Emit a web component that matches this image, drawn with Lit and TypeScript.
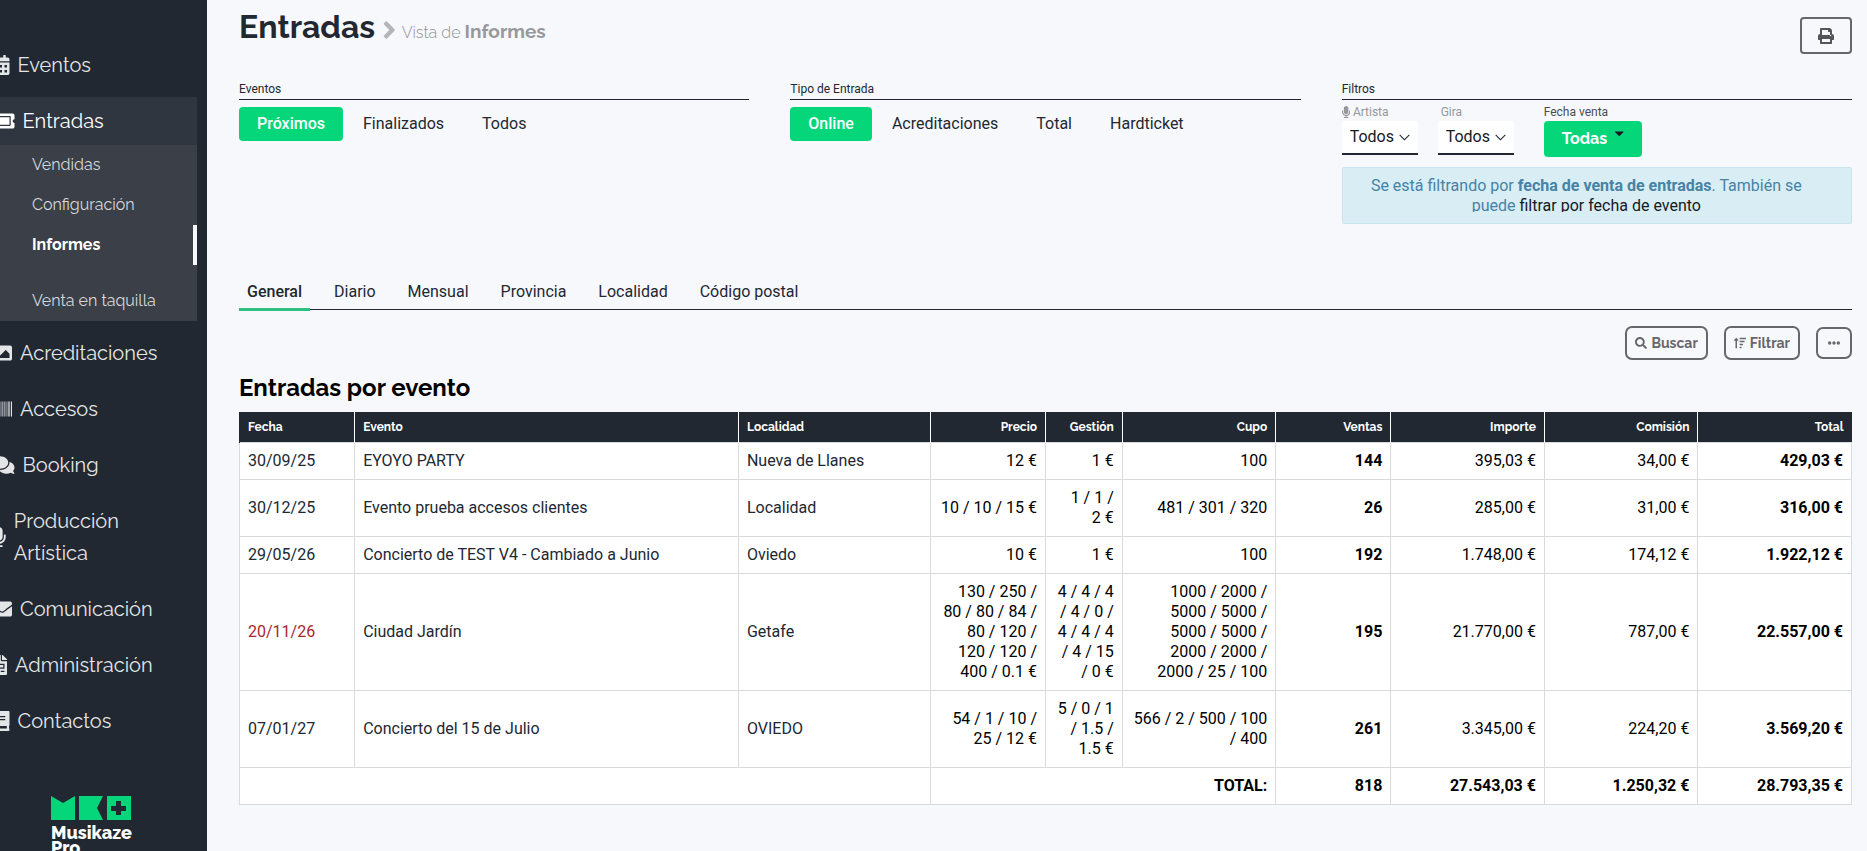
import { LitElement, html, css, svg, nothing } from "lit";
import { customElement, state } from "lit/decorators.js";
import { classMap } from "lit/directives/class-map.js";

interface Glyph { w: number; d: string; }

const ICONS: Record<string, Glyph> = {
  calendar: { w: 448, d: "M0 464c0 26.500 21.500 48 48 48h352c26.500 0 48-21.500 48-48V192H0zM400 64h-48V12c0-6.600-5.400-12-12-12h-40c-6.600 0-12 5.400-12 12v52H160V12c0-6.600-5.400-12-12-12h-40c-6.600 0-12 5.400-12 12v52H48C21.500 64 0 85.500 0 112v48h448v-48c0-26.500-21.500-48-48-48zM64 256h64v64H64zM192 256h64v64h-64zM320 256h64v64h-64zM64 384h64v64H64zM192 384h64v64h-64zM320 384h64v64h-64z" },
  ticket: { w: 576, d: "M128 160h320v192H128V160zm400 96c0 26.510 21.490 48 48 48v96c0 26.510-21.490 48-48 48H48c-26.510 0-48-21.490-48-48v-96c26.510 0 48-21.490 48-48s-21.490-48-48-48v-96c0-26.510 21.490-48 48-48h480c26.510 0 48 21.490 48 48v96c-26.510 0-48 21.490-48 48zm-48-104c0-13.255-10.745-24-24-24H120c-13.255 0-24 10.745-24 24v208c0 13.255 10.745 24 24 24h336c13.255 0 24-10.745 24-24V152z" },
  image: { w: 512, d: "M464 448H48c-26.510 0-48-21.490-48-48V112c0-26.510 21.490-48 48-48h416c26.510 0 48 21.490 48 48v288c0 26.510-21.490 48-48 48zM112 120c-30.928 0-56 25.072-56 56s25.072 56 56 56 56-25.072 56-56-25.072-56-56-56zM64 384h384V272l-87.515-87.515c-4.686-4.686-12.284-4.686-16.971 0L208 320l-55.515-55.515c-4.686-4.686-12.284-4.686-16.971 0L64 336v48z" },
  barcode: { w: 512, d: "M0 64h18v384H0zM27 64h9v384h-9zM54 64h9v384h-9zM98 64h9v384h-9zM142 64h18v384h-18zM196 64h18v384h-18zM231 64h9v384h-9zM267 64h18v384h-18zM303 64h18v384h-18zM338 64h9v384h-9zM374 64h18v384h-18zM418 64h18v384h-18zM445 64h18v384h-18zM485 64h27v384h-27z" },
  comments: { w: 576, d: "M416 192c0-88.400-93.100-160-208-160S0 103.600 0 192c0 34.300 14.100 65.900 38 92-13.400 30.200-35.500 54.200-35.800 54.500-2.200 2.300-2.800 5.700-1.500 8.700S4.800 352 8 352c36.600 0 66.900-12.300 88.700-25 32.200 15.700 70.300 25 111.300 25 114.900 0 208-71.600 208-160zm122 220c23.900-26 38-57.700 38-92 0-66.900-53.500-124.200-129.300-148.100.9 6.600 1.300 13.300 1.300 20.100 0 105.900-107.700 192-240 192-10.800 0-21.300-.8-31.700-1.900C207.800 439.600 281.800 480 368 480c41 0 79.100-9.200 111.300-25 21.800 12.700 52.100 25 88.700 25 3.200 0 6.100-1.900 7.300-4.800 1.300-2.900.7-6.300-1.500-8.700-.3-.3-22.400-24.200-35.800-54.500z" },
  microphone: { w: 352, d: "M176 352c53.020 0 96-42.980 96-96V96c0-53.020-42.980-96-96-96S80 42.980 80 96v160c0 53.020 42.980 96 96 96zm160-160h-16c-8.840 0-16 7.160-16 16v48c0 74.800-64.490 134.820-140.790 127.380C96.710 376.890 48 317.110 48 250.300V208c0-8.840-7.160-16-16-16H16c-8.840 0-16 7.160-16 16v40.160c0 89.640 63.970 169.550 152 181.690V464H96c-8.840 0-16 7.160-16 16v16c0 8.840 7.160 16 16 16h160c8.840 0 16-7.160 16-16v-16c0-8.840-7.160-16-16-16h-56v-33.770C285.710 418.470 352 344.900 352 256v-48c0-8.840-7.160-16-16-16z" },
  envelope: { w: 512, d: "M502.300 190.800c3.900-3.100 9.700-.2 9.700 4.700V400c0 26.500-21.500 48-48 48H48c-26.500 0-48-21.500-48-48V195.600c0-5 5.700-7.800 9.700-4.700 22.400 17.400 52.100 39.500 154.100 113.600 21.100 15.400 56.700 47.800 92.200 47.600 35.700.3 72-32.800 92.300-47.600 102-74.100 131.600-96.300 154-113.700zM256 320c23.200.4 56.600-29.200 73.400-41.400 132.700-96.300 142.800-104.700 173.400-128.700 5.800-4.500 9.200-11.500 9.200-18.900v-19c0-26.500-21.500-48-48-48H48c-26.500 0-48 21.500-48 48v19c0 7.400 3.400 14.300 9.200 18.900 30.600 23.900 40.700 32.400 173.400 128.700 16.800 12.200 50.200 41.800 73.400 41.400z" },
  invoice: { w: 384, d: "M377 105L279 7c-4-4-10-7-17-7h-6v128h128v-6c0-7-3-13-7-17zM224 136V0H24C11 0 0 11 0 24v464c0 13 11 24 24 24h336c13 0 24-11 24-24V160H248c-13 0-24-11-24-24zM64 64h96v32H64zM64 128h96v32H64zM64 224h256v128H64zM96 256v64h192v-64zM224 400h96v32h-96z" },
  book: { w: 448, d: "M448 360V24c0-13-11-24-24-24H96C43 0 0 43 0 96v320c0 53 43 96 96 96h328c13 0 24-11 24-24v-16c0-7-3-14-9-19-4-15-4-59 0-74 6-4 9-11 9-19zM128 128h212v32H128zM128 204h212v32H128zM381 448H96c-42 0-42-64 0-64h285c-2 17-2 47 0 64z" },
  search: { w: 512, d: "M505 442.700L405.300 343c-4.500-4.500-10.600-7-17-7H372c27.600-35.300 44-79.700 44-128C416 93.100 322.900 0 208 0S0 93.100 0 208s93.100 208 208 208c48.300 0 92.700-16.400 128-44v16.300c0 6.400 2.500 12.500 7 17l99.700 99.700c9.400 9.400 24.600 9.400 33.900 0l28.300-28.300c9.400-9.400 9.400-24.600.1-34zM208 336c-70.700 0-128-57.200-128-128 0-70.700 57.200-128 128-128 70.700 0 128 57.200 128 128 0 70.700-57.200 128-128 128z" },
  sort: { w: 512, d: "M4 132L84 40c7-8 17-8 24 0l80 92c10 11 2 28-12 28h-48v304c0 9-7 16-16 16H80c-9 0-16-7-16-16V160H16c-14 0-22-17-12-28zM240 32h272v60H240zM240 160h208v60H240zM240 288h144v60H240zM240 416h80v60h-80z" },
  print: { w: 512, d: "M400 264a24 24 0 1 0 0-48 24 24 0 1 0 0 48zM448 192V81c0-13-5-25-14-34L401 14C392 5 380 0 367 0H96C78 0 64 14 64 32v160c-35 0-64 29-64 64v112c0 9 7 16 16 16h48v112c0 9 7 16 16 16h352c9 0 16-7 16-16V384h48c9 0 16-7 16-16V256c0-35-29-64-64-64zM384 448H128v-96h256zM384 224H128V64h192v48c0 9 7 16 16 16h48z" },
  dots: { w: 512, d: "M72 184a72 72 0 1 0 0 144 72 72 0 1 0 0-144zM256 184a72 72 0 1 0 0 144 72 72 0 1 0 0-144zM440 184a72 72 0 1 0 0 144 72 72 0 1 0 0-144z" },
  angle: { w: 320, d: "M24 84l44-44c9-9 25-9 34 0l194 194c12 12 12 32 0 44L102 472c-9 9-25 9-34 0l-44-44c-9-9-9-25 0-34l138-138L24 118c-9-9-9-25 0-34z" },
  chevron: { w: 512, d: "M12 150l36-36 208 208 208-208 36 36-244 244z" },
  caret: { w: 320, d: "M16 160h288c14 0 21 17 11 27L171 331c-6 6-16 6-22 0L5 187c-10-10-3-27 11-27z" },
};

const icon = (name: string, height: number) => {
  const g = ICONS[name];
  return html`<svg class="icon" aria-hidden="true" viewBox="0 0 ${g.w} 512" width=${(g.w / 512) * height} height=${height}>
    ${svg`<path fill="currentColor" fill-rule="evenodd" d=${g.d}></path>`}
  </svg>`;
};

interface Section { label: string; icon: string; children?: { label: string; current?: boolean; apart?: boolean }[]; }

const SECTIONS: Section[] = [
  { label: "Eventos", icon: "calendar" },
  {
    label: "Entradas", icon: "ticket", children: [
      { label: "Vendidas" },
      { label: "Configuración" },
      { label: "Informes", current: true },
      { label: "Venta en taquilla", apart: true },
    ],
  },
  { label: "Acreditaciones", icon: "image" },
  { label: "Accesos", icon: "barcode" },
  { label: "Booking", icon: "comments" },
  { label: "Producción Artística", icon: "microphone" },
  { label: "Comunicación", icon: "envelope" },
  { label: "Administración", icon: "invoice" },
  { label: "Contactos", icon: "book" },
];

const COLUMNS = [
  { label: "Fecha", share: 15 },
  { label: "Evento", share: 50 },
  { label: "Localidad", share: 25 },
  { label: "Precio", share: 15, num: true },
  { label: "Gestión", share: 10, num: true },
  { label: "Cupo", share: 20, num: true },
  { label: "Ventas", share: 15, num: true, strong: true },
  { label: "Importe", share: 20, num: true },
  { label: "Comisión", share: 20, num: true },
  { label: "Total", share: 20, num: true, strong: true },
];
const SHARES = COLUMNS.reduce((sum, c) => sum + c.share, 0);

const ROWS = [
  ["30/09/25", "EYOYO PARTY", "Nueva de Llanes", "12 €", "1 €", "100", "144", "395,03 €", "34,00 €", "429,03 €"],
  ["30/12/25", "Evento prueba accesos clientes", "Localidad", "10 / 10 / 15 €", "1 / 1 / 2 €", "481 / 301 / 320", "26", "285,00 €", "31,00 €", "316,00 €"],
  ["29/05/26", "Concierto de TEST V4 - Cambiado a Junio", "Oviedo", "10 €", "1 €", "100", "192", "1.748,00 €", "174,12 €", "1.922,12 €"],
  ["20/11/26", "Ciudad Jardín", "Getafe", "130 / 250 / 80 / 80 / 84 / 80 / 120 / 120 / 120 / 400 / 0.1 €", "4 / 4 / 4 / 4 / 0 / 4 / 4 / 4 / 4 / 15 / 0 €", "1000 / 2000 / 5000 / 5000 / 5000 / 5000 / 2000 / 2000 / 2000 / 25 / 100", "195", "21.770,00 €", "787,00 €", "22.557,00 €"],
  ["07/01/27", "Concierto del 15 de Julio", "OVIEDO", "54 / 1 / 10 / 25 / 12 €", "5 / 0 / 1 / 1.5 / 1.5 €", "566 / 2 / 500 / 100 / 400", "261", "3.345,00 €", "224,20 €", "3.569,20 €"],
];
const ALERT_DATE = "20/11/26";

// The currency sign stays on the same line as its amount.
const keepCurrency = (text: string) => text.replace(" €", "\u00a0€");

@customElement("side-menu")
class SideMenu extends LitElement {
  static styles = css`
    :host {
      display: flex;
      flex-direction: column;
      box-sizing: border-box;
      height: 100vh;
      padding: 41px 10px 0 0;
      overflow: hidden;
      background: #212832;
      color: #e4e5e7;
      font-family: Raleway, Lato, sans-serif;
    }
    ul { list-style: none; margin: 0; padding: 0; }
    a { color: inherit; text-decoration: none; }
    .icon { flex: none; }
    .sections { display: flex; flex-direction: column; gap: 8px; }
    .section {
      display: flex;
      align-items: center;
      gap: 8px;
      margin-left: -8px;
      padding: 8px 24px 8px 0;
      font-size: 20px;
      line-height: 32px;
    }
    .open { background: #3a3f48; color: #fff; }
    .open .section { background: #30363f; margin-left: 0; padding-left: 0; }
    .open .section .icon { margin-left: -8px; }
    .child {
      display: block;
      padding: 0 0 0 32px;
      border-right: 4px solid transparent;
      font-size: 16px;
      line-height: 40px;
      color: #d5d7da;
    }
    .current { border-right-color: #f7f8fc; color: #fff; font-weight: 700; }
    .apart { margin-top: 16px; }
    .brand { width: 80px; margin: 51px 0 0 51px; color: #fff; font-size: 18px; line-height: 15px; font-weight: 800; }
    .mark { display: block; width: 80px; height: 24px; margin-bottom: 5px; }
  `;

  render() {
    return html`
      <nav aria-label="Principal">
        <ul class="sections">
          ${SECTIONS.map((s) => html`
            <li class=${classMap({ open: !!s.children })}>
              <a class="section" href="#">${icon(s.icon, 20)}<span>${s.label}</span></a>
              ${s.children
                ? html`<ul>${s.children.map((c) => html`
                    <li class=${classMap({ apart: !!c.apart })}>
                      <a href="#" class=${classMap({ child: true, current: !!c.current })}>${c.label}</a>
                    </li>`)}</ul>`
                : nothing}
            </li>`)}
        </ul>
      </nav>
      <a class="brand" href="#">
        <svg class="mark" viewBox="0 0 80 24" aria-hidden="true">
          <path fill="#05d67a" d="M0 0l12 7L24 0v24H0zM28 0h24l-6 12 6 12H28z"></path>
          <path fill="#05d67a" fill-rule="evenodd" d="M56 0h24v24H56zM65 5v5h-5v5h5v4h5v-4h5v-5h-5V5z"></path>
        </svg>
        Musikaze Pro
      </a>`;
  }
}

@customElement("choice-group")
class ChoiceGroup extends LitElement {
  static properties = { label: {}, options: { attribute: false }, value: { state: true } };
  declare label: string;
  declare options: string[];
  declare value: string;

  static styles = css`
    :host { display: block; }
    fieldset { margin: 0; padding: 0; border: 0; min-width: 0; }
    legend {
      box-sizing: border-box;
      width: 100%;
      padding: 0;
      border-bottom: 1px solid #212832;
      font-size: 12px;
      line-height: 20px;
    }
    .options { display: flex; flex-wrap: wrap; gap: 2px; padding-top: 7px; }
    button {
      padding: 0 18px;
      border: 0;
      border-radius: 4px;
      background: none;
      color: #212832;
      font: 400 16px/34px Roboto, sans-serif;
    }
    .on { background: #05d67a; color: #fff; font-weight: 500; }
  `;

  render() {
    const current = this.value ?? this.options[0];
    return html`<fieldset>
      <legend>${this.label}</legend>
      <div class="options">
        ${this.options.map((o) => html`
          <button type="button" aria-pressed=${o === current} class=${classMap({ on: o === current })}
            @click=${() => (this.value = o)}>${o}</button>`)}
      </div>
    </fieldset>`;
  }
}

@customElement("sales-table")
class SalesTable extends LitElement {
  static styles = css`
    :host { display: block; }
    table {
      width: 100%;
      table-layout: fixed;
      border-collapse: collapse;
      background: #fff;
      font-size: 16px;
      line-height: 20px;
    }
    th, td { padding: 8px; border: 1px solid #d9dadd; text-align: left; font-weight: 400; }
    thead th {
      padding: 5px 8px;
      border: 0;
      border-left: 1px solid #fff;
      background: #212832;
      color: #fff;
      font: 700 12px/20px Raleway, Lato, sans-serif;
    }
    thead th:first-child { border-left-color: #212832; }
    .num { text-align: right; color: #000; }
    thead .num { color: #fff; }
    .strong { font-weight: 700; }
    .late { color: #a8262e; }
  `;

  render() {
    return html`<table>
      <colgroup>${COLUMNS.map((c) => html`<col style="width:${(c.share / SHARES) * 100}%">`)}</colgroup>
      <thead><tr>${COLUMNS.map((c) => html`<th scope="col" class=${classMap({ num: !!c.num })}>${c.label}</th>`)}</tr></thead>
      <tbody>
        ${ROWS.map((row) => html`<tr>${row.map((cell, i) => html`
          <td class=${classMap({ num: !!COLUMNS[i].num, strong: !!COLUMNS[i].strong, late: cell === ALERT_DATE })}>${keepCurrency(cell)}</td>`)}</tr>`)}
      </tbody>
      <tfoot><tr>
        <td colspan="3"></td>
        <th scope="row" colspan="3" class="num strong">TOTAL:</th>
        ${["818", "27.543,03 €", "1.250,32 €", "28.793,35 €"].map((t) => html`<td class="num strong">${keepCurrency(t)}</td>`)}
      </tr></tfoot>
    </table>`;
  }
}

@customElement("app-root")
class AppRoot extends LitElement {
  @state() private tab = "General";

  static styles = css`
    :host {
      display: grid;
      grid-template-columns: 207px minmax(0, 1fr);
      min-height: 100vh;
      background: #f7f8fc;
      color: #212832;
      font-family: Roboto, sans-serif;
      font-size: 16px;
    }
    side-menu { position: sticky; top: 0; }
    main { padding: 0 15px 16px 32px; }
    button { background: none; font-family: inherit; }
    .head { display: flex; justify-content: space-between; align-items: flex-start; height: 79px; }
    .title {
      display: flex;
      align-items: baseline;
      gap: 6px;
      margin: 0;
      padding-top: 7px;
      font: 700 32px/40px Raleway, Lato, sans-serif;
    }
    .title .icon { position: relative; top: 2px; margin-left: 2px; color: #b4b5b8; }
    .where { color: #8f9093; font-size: 16px; font-weight: 300; }
    .where b { color: #97989b; font-size: 19px; font-weight: 700; }
    .print {
      display: grid;
      place-items: center;
      width: 52px;
      height: 37px;
      margin-top: 17px;
      padding: 0;
      border: 2px solid #66676a;
      border-radius: 4px;
      color: #55565a;
    }
    .filters { display: grid; grid-template-columns: repeat(3, minmax(0, 1fr)); gap: 41px; min-height: 196px; }
    .caption { margin: 0; border-bottom: 1px solid #212832; font-size: 12px; line-height: 20px; font-weight: 400; }
    .fields { display: flex; gap: 20px; padding-top: 3px; }
    .field { display: flex; flex-direction: column; }
    .field label, .date-label { font-size: 12px; line-height: 18px; color: #96979b; }
    .field .icon { vertical-align: -2px; }
    .indent { padding-left: 3px; }
    .date { margin-left: 10px; }
    .date .date-label { color: #4a4d52; }
    .pick { display: grid; grid-template-columns: 1fr; align-items: center; border-bottom: 2px solid #212832; background: #fff; }
    .pick > * { grid-area: 1 / 1; }
    .pick .icon { justify-self: end; margin-right: 8px; pointer-events: none; }
    select {
      appearance: none;
      width: 76px;
      height: 32px;
      padding: 0 8px 2px;
      border: 0;
      background: none;
      color: #16191e;
      font: 400 16px Roboto, sans-serif;
    }
    .range {
      display: flex;
      gap: 8px;
      width: 98px;
      padding: 0 18px;
      border: 0;
      border-radius: 4px;
      background: #05d67a;
      color: #fff;
      font: 700 16px/36px Raleway, Lato, sans-serif;
    }
    .range .icon { color: #16191e; margin-top: 6px; }
    .notice {
      margin-top: 10px;
      padding: 8px 35px 11px 14px;
      border: 1px solid #c9e6ee;
      border-radius: 2px;
      background: #d9edf5;
      color: #4683a5;
      text-align: center;
      line-height: 20px;
    }
    .notice p { max-height: 36px; margin: 0; overflow: hidden; }
    .notice b { font-weight: 700; }
    .notice a { color: #16191e; text-decoration: none; }
    .tabs { display: flex; gap: 16px; border-bottom: 1px solid #212832; }
    .tab {
      margin-bottom: -2px;
      padding: 0 8px;
      border: 0;
      border-bottom: 3px solid transparent;
      color: inherit;
      font-size: 16px;
      line-height: 33px;
    }
    .tab.on { border-bottom-color: #2cc081; font-weight: 500; }
    .tools { display: flex; justify-content: flex-end; align-items: center; gap: 16px; padding-top: 16px; }
    .tool {
      display: flex;
      align-items: center;
      justify-content: center;
      gap: 4px;
      padding: 0 8px;
      border: 2px solid #66676a;
      border-radius: 7px;
      color: #66676a;
      font: 700 14px/30px Raleway, Lato, sans-serif;
    }
    .more { height: 32px; padding: 0 10px; }
    h2 { margin: 12px 0 9px; color: #000; font: 700 24px/31px Raleway, Lato, sans-serif; }
  `;

  private select(id: string) {
    return html`<div class="pick"><select id=${id}><option>Todos</option></select>${icon("chevron", 11)}</div>`;
  }

  render() {
    return html`
      <side-menu></side-menu>
      <main>
        <header class="head">
          <h1 class="title">Entradas ${icon("angle", 20)}<span class="where">Vista de <b>Informes</b></span></h1>
          <button class="print" type="button" aria-label="Imprimir">${icon("print", 16)}</button>
        </header>
        <div class="filters">
          <choice-group .label=${"Eventos"} .options=${["Próximos", "Finalizados", "Todos"]}></choice-group>
          <choice-group .label=${"Tipo de Entrada"} .options=${["Online", "Acreditaciones", "Total", "Hardticket"]}></choice-group>
          <section>
            <h3 class="caption">Filtros</h3>
            <div class="fields">
              <div class="field"><label for="artista">${icon("microphone", 12)} Artista</label>${this.select("artista")}</div>
              <div class="field"><label class="indent" for="gira">Gira</label>${this.select("gira")}</div>
              <div class="field date">
                <span class="date-label" id="fecha">Fecha venta</span>
                <button class="range" type="button" aria-describedby="fecha">Todas ${icon("caret", 14)}</button>
              </div>
            </div>
            <div class="notice"><p>Se está filtrando por <b>fecha de venta de entradas</b>. También se puede <a href="#">filtrar por fecha de evento</a></p></div>
          </section>
        </div>
        <div class="tabs" role="tablist">
          ${["General", "Diario", "Mensual", "Provincia", "Localidad", "Código postal"].map((t) => html`
            <button type="button" role="tab" aria-selected=${t === this.tab} class=${classMap({ tab: true, on: t === this.tab })}
              @click=${() => (this.tab = t)}>${t}</button>`)}
        </div>
        <div class="tools">
          <button class="tool" type="button">${icon("search", 12)}Buscar</button>
          <button class="tool" type="button">${icon("sort", 12)}Filtrar</button>
          <button class="tool more" type="button" aria-label="Más opciones">${icon("dots", 12)}</button>
        </div>
        <h2>Entradas por evento</h2>
        <sales-table></sales-table>
      </main>`;
  }
}
